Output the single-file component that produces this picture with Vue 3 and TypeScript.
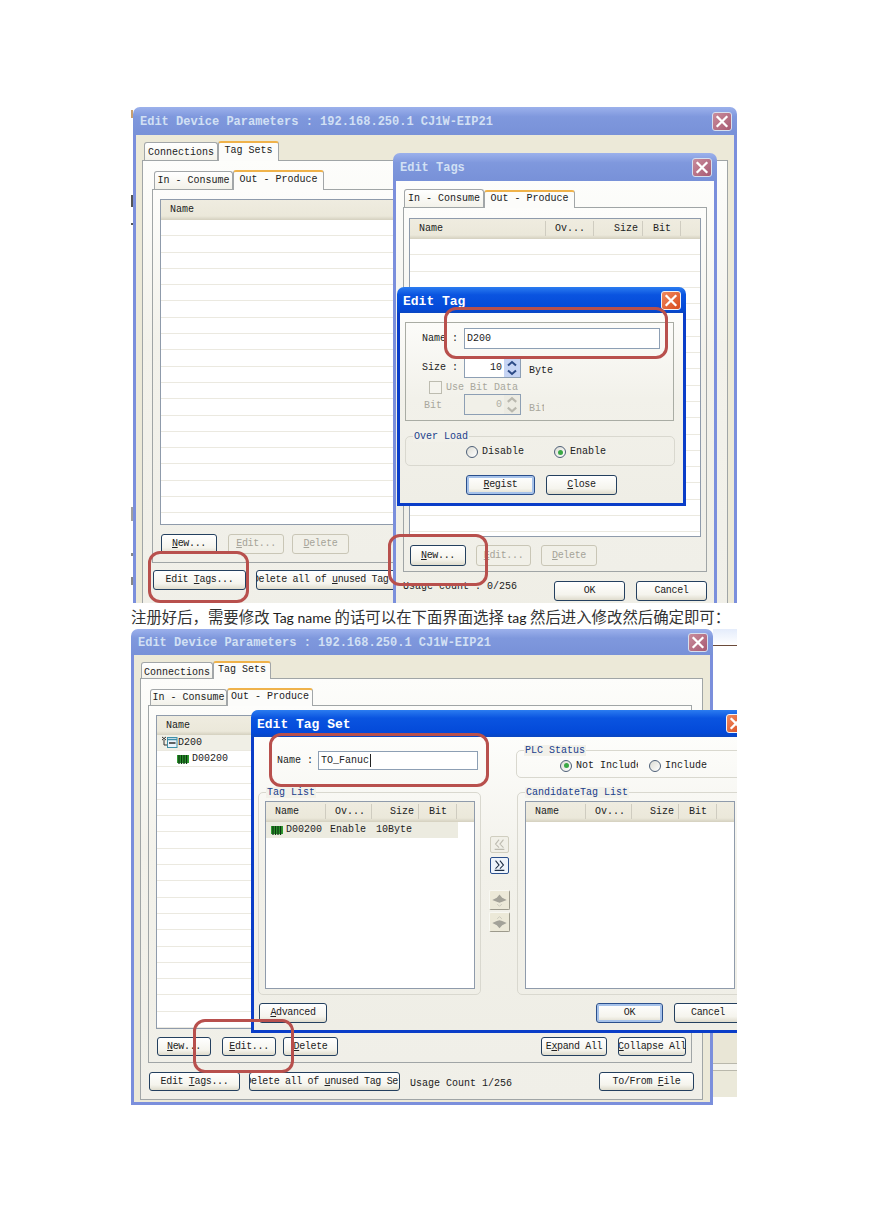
<script setup lang="ts">
const marks = [
  { top: 3, h: 8, c: '#c9a070' },
  { top: 88, h: 12, c: '#555' },
  { top: 116, h: 2, c: '#555' },
  { top: 400, h: 14, c: '#a0a0a0' },
  { top: 446, h: 3, c: '#888' },
  { top: 470, h: 8, c: '#888' }
]
const rows = (n: number) => Array.from({ length: n }, (_, i) => i)
</script>

<template>
  <div class="page">
    <section class="fig fig-a">
      <i v-for="m in marks" :key="m.top" class="mark" :style="{ top: m.top + 'px', height: m.h + 'px', background: m.c }"></i>

      <div class="win main-a">
        <header class="title dim">
          <span>Edit Device Parameters : 192.168.250.1 CJ1W-EIP21</span>
          <svg class="x x-dim" viewBox="0 0 20 19"><path d="M5 4.5l10 10M15 4.5l-10 10" stroke="#fff" stroke-width="2.6" stroke-linecap="square" /></svg>
        </header>
        <div class="body beige">
          <div class="tabs">
            <span class="tab w74 low">Connections</span>
            <span class="tab on w61">Tag Sets</span>
          </div>
          <div class="panel pa-outer">
            <div class="tabs tabs-in">
              <span class="tab w79">In - Consume</span>
              <span class="tab on w91">Out - Produce</span>
            </div>
            <div class="panel pa-inner">
              <div class="list la">
                <div class="head"><span class="cell">Name</span></div>
                <div v-for="r in rows(20)" :key="r" class="row"></div>
              </div>
              <div class="btns ba">
                <button class="b w56"><span><u>N</u>ew...</span></button>
                <button class="b off w56"><span><u>E</u>dit...</span></button>
                <button class="b off w57"><span><u>D</u>elete</span></button>
              </div>
            </div>
            <div class="btns bb">
              <button class="b w93"><span>Edit <u>T</u>ags...</span></button>
              <button class="b w152"><span>Delete all of <u>u</u>nused Tag Set</span></button>
            </div>
          </div>
        </div>
      </div>

      <div class="win tags-a">
        <header class="title dim">
          <span>Edit Tags</span>
          <svg class="x x-dim" viewBox="0 0 20 19"><path d="M5 4.5l10 10M15 4.5l-10 10" stroke="#fff" stroke-width="2.6" stroke-linecap="square" /></svg>
        </header>
        <div class="body soft ta-body">
          <div class="tabs tabs-t">
            <span class="tab w80">In - Consume</span>
            <span class="tab on w91">Out - Produce</span>
          </div>
          <div class="panel ta-panel">
            <div class="list lb">
              <div class="head grid-t">
                <span class="cell">Name</span><span class="cell">Ov...</span><span class="cell end">Size</span><span class="cell mid">Bit</span><span></span>
              </div>
              <div v-for="r in rows(19)" :key="r" class="row grid-t"><span></span><span></span><span></span><span></span><span></span></div>
            </div>
            <div class="btns bc">
              <button class="b focus-soft w56"><span><u>N</u>ew...</span></button>
              <button class="b off w55"><span><u>E</u>dit...</span></button>
              <button class="b off w56"><span><u>D</u>elete</span></button>
            </div>
          </div>
          <div class="foot">
            <span class="usage">Usage count : 0/256</span>
            <button class="b w71"><span>OK</span></button>
            <button class="b w71"><span>Cancel</span></button>
          </div>
        </div>
      </div>

      <div class="win active tag-dlg">
        <header class="title hot">
          <span>Edit Tag</span>
          <svg class="x x-hot" viewBox="0 0 20 19"><path d="M5 4.5l10 10M15 4.5l-10 10" stroke="#fff" stroke-width="2.6" stroke-linecap="square" /></svg>
        </header>
        <div class="body soft dlg-body">
          <div class="group form">
            <div class="frow r-name">
              <label class="lab">Name :</label>
              <span class="input w196">D200</span>
            </div>
            <div class="frow r-size">
              <label class="lab">Size :</label>
              <span class="input w57 num">10
                <span class="spin">
                  <svg viewBox="0 0 15 9"><path d="M3.5 6.5l4-3.5 4 3.5" fill="none" stroke="#2c4a86" stroke-width="2" /></svg>
                  <svg viewBox="0 0 15 9"><path d="M3.5 2.5l4 3.5 4-3.5" fill="none" stroke="#2c4a86" stroke-width="2" /></svg>
                </span>
              </span>
              <span class="unit">Byte</span>
            </div>
            <div class="frow r-check">
              <span class="check"></span><span class="gray">Use Bit Data</span>
            </div>
            <div class="frow r-bit">
              <label class="lab gray bitlab">Bit</label>
              <span class="input w57 num dis">0
                <span class="spin spin-dis">
                  <svg viewBox="0 0 15 9"><path d="M3.5 6.5l4-3.5 4 3.5" fill="none" stroke="#b9b8ae" stroke-width="2" /></svg>
                  <svg viewBox="0 0 15 9"><path d="M3.5 2.5l4 3.5 4-3.5" fill="none" stroke="#b9b8ae" stroke-width="2" /></svg>
                </span>
              </span>
              <span class="unit gray cutbit">Bit</span>
            </div>
          </div>
          <div class="group round overload">
            <span class="legend">Over Load</span>
            <span class="radio"></span><span class="rtext g1">Disable</span>
            <span class="radio on"></span><span class="rtext">Enable</span>
          </div>
          <div class="btns bd">
            <button class="b focus w69"><span><u>R</u>egist</span></button>
            <button class="b w71"><span><u>C</u>lose</span></button>
          </div>
        </div>
      </div>

      <div class="red r1"></div>
      <div class="red r2"></div>
      <div class="red r3"></div>
    </section>

    <p class="caption">注册好后，需要修改 <span class="lat">Tag name</span> 的话可以在下面界面选择 <span class="lat">tag</span> 然后进入修改然后确定即可：</p>

    <section class="fig fig-b">
      <div class="backdrop">
        <div class="bd-top"></div>
        <div class="bd-bot"></div>
      </div>

      <div class="win main-b">
        <header class="title dim short">
          <span>Edit Device Parameters : 192.168.250.1 CJ1W-EIP21</span>
          <svg class="x x-dim" viewBox="0 0 20 19"><path d="M5 4.5l10 10M15 4.5l-10 10" stroke="#fff" stroke-width="2.6" stroke-linecap="square" /></svg>
        </header>
        <div class="body beige">
          <div class="tabs tabs-c">
            <span class="tab w72 low">Connections</span>
            <span class="tab on w58">Tag Sets</span>
          </div>
          <div class="panel pb-outer">
            <div class="tabs tabs-d">
              <span class="tab w77">In - Consume</span>
              <span class="tab on w86">Out - Produce</span>
            </div>
            <div class="panel pb-inner">
              <div class="list lc">
                <div class="head hb"><span class="cell">Name</span></div>
                <div class="row sel">
                  <svg class="tree" viewBox="0 0 16 13">
                    <path d="M0 1l4 3M4 1L0 4M2 4v5h3" stroke="#333" fill="none" />
                    <rect x="5.500" y="1.500" width="9.500" height="10" fill="#eaf3fc" stroke="#3f8fa8" />
                    <path d="M5.500 3.500h9.500" stroke="#3f8fa8" stroke-width="1.500" />
                    <path d="M7 7h6.500" stroke="#222" stroke-width="1.400" />
                  </svg>
                  <span class="sans">D200</span>
                </div>
                <div class="row">
                  <svg class="chip ind" viewBox="0 0 12 10">
                    <rect width="12" height="8" y="1" fill="#2f9a2f" />
                    <path d="M2 1v9M4.500 1v9M7 1v9M9.500 1v9" stroke="#0c3a10" stroke-width="1.300" />
                  </svg>
                  <span class="sans">D00200</span>
                </div>
                <div v-for="r in rows(17)" :key="r" class="row"></div>
              </div>
              <div class="btns be">
                <button class="b w54"><span><u>N</u>ew...</span></button>
                <button class="b w54 ml11"><span><u>E</u>dit...</span></button>
                <button class="b w55 ml7"><span><u>D</u>elete</span></button>
                <span class="grow"></span>
                <button class="b w66"><span>E<u>x</u>pand All</span></button>
                <button class="b w68 ml11"><span><u>C</u>ollapse All</span></button>
              </div>
            </div>
            <div class="btns bf">
              <button class="b w91"><span>Edit <u>T</u>ags...</span></button>
              <button class="b w151 ml9"><span>Delete all of <u>u</u>nused Tag Set</span></button>
              <span class="count">Usage Count 1/256</span>
              <span class="grow"></span>
              <button class="b w95"><span>To/From <u>F</u>ile</span></button>
            </div>
          </div>
        </div>
      </div>

      <div class="win active set-dlg">
        <header class="title hot h27">
          <span>Edit Tag Set</span>
          <svg class="x x-hot" viewBox="0 0 20 19"><path d="M5 4.5l10 10M15 4.500l-10 10" stroke="#fff" stroke-width="2.6" stroke-linecap="square" /></svg>
        </header>
        <div class="body soft set-body">
          <div class="set-top">
            <div class="set-name">
              <label class="lab ln">Name :</label>
              <span class="input w160">TO_Fanuc<i class="caret"></i></span>
            </div>
            <div class="group round plc">
              <span class="legend">PLC Status</span>
              <span class="radio on"></span><span class="rtext clip">Not Include</span>
              <span class="radio"></span><span class="rtext">Include</span>
            </div>
          </div>
          <div class="set-mid">
            <div class="group round gl">
              <span class="legend">Tag List</span>
              <div class="list ld">
                <div class="head grid-s">
                  <span class="cell">Name</span><span class="cell">Ov...</span><span class="cell end">Size</span><span class="cell mid">Bit</span><span></span>
                </div>
                <div class="item">
                  <svg class="chip" viewBox="0 0 12 10">
                    <rect width="12" height="8" y="1" fill="#2f9a2f" />
                    <path d="M2 1v9M4.500 1v9M7 1v9M9.500 1v9" stroke="#0c3a10" stroke-width="1.300" />
                  </svg>
                  <span class="sans i1">D00200</span><span class="i2">Enable</span><span class="i3">10Byte</span>
                </div>
              </div>
            </div>
            <div class="arrows">
              <button class="ab off">
                <svg viewBox="0 0 19 17"><path d="M9 3L5 8l4 4M14 3l-4 5 4 4M4 14h11" fill="none" stroke="#bdbbb0" stroke-width="1.200" /></svg>
              </button>
              <button class="ab live">
                <svg viewBox="0 0 19 17"><path d="M5 3l4 5-4 4M10 3l4 5-4 4M4 14h11" fill="none" stroke="#1f2f46" stroke-width="1.200" /></svg>
              </button>
              <button class="ab sq first">
                <svg viewBox="0 0 21 20"><path d="M10.500 4l3 3.500 5 2.500-5 2-3 1-3-1-5-2 5-2.500z" fill="#a3a298" /><path d="M8 14.500l2.500 2.500 2.500-2.500" fill="none" stroke="#c6c5b9" /></svg>
              </button>
              <button class="ab sq">
                <svg viewBox="0 0 21 20"><path d="M10.500 17l3-3.500 5-2.500-5-2-3-1-3 1-5 2 5 2.500z" fill="#a3a298" /><path d="M8 6.500L10.500 4 13 6.500" fill="none" stroke="#c6c5b9" /></svg>
              </button>
            </div>
            <div class="group round gr">
              <span class="legend">CandidateTag List</span>
              <div class="list le">
                <div class="head grid-s">
                  <span class="cell">Name</span><span class="cell">Ov...</span><span class="cell end">Size</span><span class="cell mid">Bit</span><span></span>
                </div>
              </div>
            </div>
          </div>
          <div class="btns bg">
            <button class="b w68"><span><u>A</u>dvanced</span></button>
            <span class="grow"></span>
            <button class="b focus w67"><span>OK</span></button>
            <button class="b w68 ml11"><span>Cancel</span></button>
          </div>
        </div>
      </div>

      <div class="red r4"></div>
      <div class="red r5"></div>
    </section>
  </div>
</template>

<style>
html, body { background: #fff; }
</style>

<style scoped>
.page {
  width: 869px;
  height: 1228px;
  padding: 107px 0 0 131px;
  box-sizing: border-box;
  background: #fff;
  font: 10px/1.2 "Liberation Mono", "DejaVu Sans Mono", monospace;
  color: #222;
  overflow: hidden;
}
.fig { position: relative; overflow: hidden; }
.fig-a { width: 607px; height: 496px; }
.fig-b { width: 606px; height: 476px; }
.mark { position: absolute; left: 0; width: 2px; }
.caption {
  margin: 0;
  height: 26px;
  width: 640px;
  font: 15.4px/26px "Noto Sans CJK SC", sans-serif;
  color: #333;
  white-space: nowrap;
}
.lat { font: 14px/26px Lato, sans-serif; color: #1c1c1c; }

/* windows */
.win { position: absolute; }
.main-a { left: 2px; top: 0; width: 604px; height: 520px; }
.tags-a { left: 262px; top: 46px; width: 324px; height: 470px; }
.tag-dlg { left: 266px; top: 180px; width: 289px; height: 219px; }
.main-b { left: 0; top: 0; width: 582px; height: 476px; }
.set-dlg { left: 120px; top: 81px; width: 500px; height: 323px; }

.title {
  height: 28px;
  box-sizing: border-box;
  border-radius: 7px 7px 0 0;
  display: flex;
  align-items: center;
  justify-content: space-between;
  padding: 0 5px 0 7px;
  font-size: 12px;
  font-weight: 700;
  white-space: nowrap;
}
.title > span { padding-top: 3px; }
.short { height: 26px; padding-right: 5px; }
.short > span { padding-top: 2px; }
.h27 { height: 27px; }
.dim {
  background: linear-gradient(#9cb1ec, #7f98dd 35%, #7891d8);
  color: #d2e0f4;
}
.hot {
  background: linear-gradient(#2b7cf0, #0a54e0 30%, #0349d8 85%, #0a46c0);
  color: #fff;
  font-size: 13px;
  height: 26px;
  padding-left: 6px;
}
.set-dlg .hot { height: 27px; }
.set-dlg .hot > span { padding-top: 2px; }
.x { width: 20px; height: 19px; border-radius: 3px; flex: none; }
.x-dim { background: linear-gradient(135deg, #c98c9c, #a85a72); border: 1px solid #d7dfee; box-sizing: border-box; }
.x-hot { background: linear-gradient(135deg, #f08a60, #d84a1c); border: 1px solid #f2f2f2; box-sizing: border-box; }

.body {
  box-sizing: border-box;
  border: solid #7b8fdc;
  border-width: 0 3px 3px;
}
.active .body { border-color: #0a3dc8; }
.beige { background: #ece9d8; padding: 5px 6px 0; height: calc(100% - 28px); }
.main-b .beige { height: calc(100% - 26px); padding-right: 7px; }
.soft { background: linear-gradient(#fdfdfb, #f2f1ea 45%, #efeee6); }

/* tabs */
.tabs { display: flex; align-items: flex-end; height: 20px; }
.tab {
  height: 18px;
  box-sizing: border-box;
  border: 1px solid #a2a6a8;
  border-bottom: 0;
  border-radius: 3px 3px 0 0;
  background: linear-gradient(#fff, #f3f2ea);
  text-align: center;
  line-height: 18px;
  white-space: nowrap;
}
.tab.on {
  height: 20px;
  border-top: 2px solid #efb24a;
  background: #fcfcfa;
  line-height: 15px;
  z-index: 1;
  margin-bottom: -1px;
}
.w74 { width: 74px; margin-left: 2px; }
.w61 { width: 61px; }
.w79 { width: 79px; margin-left: 2px; }
.w91 { width: 91px; }
.w80 { width: 80px; }
.w72 { width: 72px; margin-left: 1px; }
.w58 { width: 58px; }
.w77 { width: 77px; margin-left: 2px; }
.w86 { width: 86px; }
.tabs-t { height: 18px; padding-left: 1px; }
.tabs-t .tab.on { height: 18px; line-height: 13px; }
.tabs-c { height: 18px; }
.tabs-c .tab { height: 16px; line-height: 16px; }
.tabs-c .tab.on { height: 18px; line-height: 13px; }
.tabs-d { height: 18px; }
.tabs-d .tab { height: 16px; line-height: 16px; }
.tabs-d .tab.on { height: 18px; line-height: 13px; }
.tab.low { line-height: 20px; }
.tabs-c .tab.low { line-height: 19px; }

.panel {
  border: 1px solid #a0a5a6;
  box-sizing: border-box;
  background: linear-gradient(#fdfdfb, #f3f2eb 40%, #f0efe8);
}
.pa-outer { padding: 8px 11px 0 9px; height: 460px; }
.pa-inner { padding: 9px 0 8px 7px; height: 374px; }
.ta-body { padding: 8px 7px 0; height: 442px; }
.ta-panel { padding: 10px 5px 0; height: 365px; }
.pb-outer { padding: 8px 10px 0 7px; height: 422px; }
.pb-inner { padding: 9px 5px 0 7px; height: 358px; }

/* lists */
.list {
  border: 1px solid #8f9bab;
  box-sizing: border-box;
  background: #fff;
  overflow: hidden;
}
.la { height: 326px; }
.lb { height: 319px; }
.lc { height: 314px; }
.ld { height: 188px; }
.le { height: 188px; }
.head {
  height: 20px;
  background: linear-gradient(#efece0, #ebe8da 80%, #d4d0bf);
  line-height: 20px;
  box-sizing: border-box;
}
.hb { height: 19px; }
.cell { padding-left: 9px; display: block; white-space: nowrap; }
.head .cell:not(:only-child) { border-right: 1px solid #cfccc0; height: 15px; line-height: 15px; margin-top: 2px; }
.cell.end { text-align: right; padding: 0 4px 0 0; }
.cell.mid { padding-left: 10px; }
.row { height: 16.3px; border-bottom: 1px solid #ebe9e0; box-sizing: border-box; display: flex; align-items: center; }
.row.sel { background: #f0efe6; height: 16px; }
.grid-t { display: grid; grid-template-columns: 136px 48px 49px 38px 1fr; }
.row.grid-t > span { border-right: 1px solid #efede5; }
.grid-s { display: grid; grid-template-columns: 60px 46px 47px 38px 1fr; }
.tree { width: 16px; height: 13px; margin-left: 5px; }
.chip { width: 12px; height: 10px; flex: none; }
.chip.ind { margin-left: 20px; margin-right: 3px; }
.sans { font-size: 10px; }
.item {
  height: 16px;
  width: 192px;
  background: #ecebe0;
  display: flex;
  align-items: center;
  padding-left: 5px;
  box-sizing: border-box;
  white-space: nowrap;
}
.i1 { margin-left: 3px; width: 44px; }
.i2 { width: 46px; }

/* buttons */
.btns { display: flex; align-items: flex-start; }
.b {
  height: 20px;
  padding: 0;
  box-sizing: border-box;
  border: 1px solid #24405f;
  border-radius: 3px;
  background: linear-gradient(#fff, #f5f4ed 70%, #dfdccd);
  font: inherit;
  letter-spacing: -0.35px;
  color: #222;
  display: flex;
  align-items: center;
  justify-content: center;
  white-space: pre;
  overflow: hidden;
  flex: none;
}
.b > span { flex: none; }
.b u { text-underline-offset: 1px; }
.b.off { border-color: #c9c6b6; background: #f1f0e8; color: #a5a398; }
.b.focus { box-shadow: inset 0 0 0 2px #a6c2ea; border-color: #2a4f8c; }
.b.focus-soft { border-color: #24405f; }
.ba { margin-top: 9px; margin-left: 1px; gap: 11px; }
.ba .w57 { margin-left: -3px; }
.bb { margin: 7px 0 0 1px; gap: 10px; }
.bc { margin: 8px 0 0 1px; gap: 10px; }
.bc .b { height: 21px; }
.bd { margin-top: 9px; justify-content: center; gap: 11px; }
.be { margin: 8px 0 0 1px; }
.be .b, .bf .b { height: 19px; }
.bf { margin: 9px -2px 0 1px; align-items: center; }
.bg { margin: 8px 0 0 1px; }
.grow { flex: 1; }
.ml7 { margin-left: 7px; }
.ml9 { margin-left: 9px; }
.ml11 { margin-left: 11px; }
.w54 { width: 54px; }
.w55 { width: 55px; }
.w56 { width: 56px; }
.w57 { width: 57px; }
.w66 { width: 66px; }
.w67 { width: 67px; }
.w68 { width: 68px; }
.w69 { width: 69px; }
.w71 { width: 71px; }
.w93 { width: 93px; }
.w91.b { width: 91px; }
.w95 { width: 95px; }
.w151 { width: 151px; }
.w152 { width: 152px; }
.foot { display: flex; margin-top: 9px; align-items: flex-start; }
.usage { width: 152px; margin-right: 1px; margin-top: 0; }
.foot .b + .b { margin-left: 11px; }
.count { margin-left: 10px; margin-top: 5px; }

/* edit tag dialog */
.dlg-body { padding: 9px 5px 0; height: calc(100% - 26px); }
.group {
  position: relative;
  border: 1px solid #a9aca4;
  box-sizing: border-box;
}
.round { border: 1px solid #d9d8cf; border-radius: 5px; }
.form { height: 99px; width: 269px; }
.frow { display: flex; align-items: center; white-space: nowrap; }
.lab { width: 58px; padding-left: 16px; box-sizing: border-box; flex: none; }
.r-name { margin-top: 5px; height: 21px; }
.r-size { margin-top: 9px; height: 20px; }
.r-check { margin-top: 4px; height: 11px; padding-left: 23px; }
.r-bit { margin-top: 1px; height: 21px; }
.input {
  box-sizing: border-box;
  border: 1px solid #8d9fb4;
  background: #fff;
  height: 100%;
  display: flex;
  align-items: center;
  padding-left: 2px;
  position: relative;
  flex: none;
  font-size: 10px;
}
.w196 { width: 196px; }
.w57.input { width: 57px; }
.w160 { width: 160px; height: 19px; }
.num { justify-content: flex-end; padding-right: 18px; }
.dis { background: #f1f0e8; color: #b0afa4; }
.spin {
  position: absolute;
  right: 0;
  top: 0;
  bottom: 0;
  width: 16px;
  background: #c6d4f4;
  display: flex;
  flex-direction: column;
}
.spin svg { flex: 1; min-height: 0; width: 100%; }
.spin-dis { background: #ecebe2; }
.unit { margin-left: 8px; padding-top: 6px; }
.r-bit .lab { padding-top: 3px; }
.gray { color: #a8a79c; }
.bitlab { padding-left: 18px; }
.cutbit { width: 15px; overflow: hidden; padding-top: 9px; }
.check { width: 11px; height: 11px; border: 1px solid #bdbcb0; margin-right: 4px; background: #f5f4ee; flex: none; }
.overload {
  margin-top: 15px;
  height: 30px;
  width: 270px;
  display: flex;
  align-items: center;
  padding: 2px 0 0 60px;
}
.legend {
  position: absolute;
  left: 7px;
  top: -6px;
  padding: 0 1px;
  background: #f2f1ea;
  color: #20408c;
  line-height: 11px;
}
.radio {
  width: 12px;
  height: 12px;
  border-radius: 50%;
  border: 1px solid #4d5f77;
  box-sizing: border-box;
  background: linear-gradient(135deg, #dcdcd4, #fff);
  flex: none;
  display: flex;
  align-items: center;
  justify-content: center;
  margin-right: 4px;
}
.radio.on::after { content: ""; width: 5px; height: 5px; border-radius: 50%; background: #3aa845; }
.g1 { margin-right: 30px; }
.rtext { white-space: nowrap; }

/* edit tag set dialog */
.set-body { padding: 13px 6px 0 4px; height: calc(100% - 27px); }
.set-top { display: flex; height: 28px; }
.set-name { display: flex; align-items: center; width: 258px; height: 21px; flex: none; }
.ln { width: 60px; padding-left: 19px; }
.caret { display: inline-block; width: 1px; height: 13px; background: #222; margin-left: 1px; }
.plc { width: 228px; height: 28px; display: flex; align-items: center; padding: 3px 0 0 43px; }
.clip { width: 62px; overflow: hidden; margin-right: 11px; }
.set-mid { display: flex; margin-top: 14px; }
.gl { width: 223px; height: 203px; padding: 8px 5px 0 6px; flex: none; }
.gr { width: 225px; height: 203px; padding: 8px 6px 0 7px; flex: none; }
.arrows { width: 36px; flex: none; display: flex; flex-direction: column; align-items: center; padding-top: 44px; box-sizing: border-box; }
.ab { padding: 0; box-sizing: border-box; background: #f1f0e8; border: 1px solid #d0cebf; border-radius: 2px; display: block; flex: none; }
.ab svg { display: block; width: 100%; height: 100%; }
.ab.off, .ab.live { width: 19px; height: 17px; }
.ab.live { margin-top: 4px; border-color: #2a4f8c; background: #eef4fb; }
.ab.sq { width: 21px; height: 20px; margin-top: 2px; border: 1px solid; border-color: #f8f8f2 #9c9a8c #9c9a8c #f8f8f2; background: #ece9d8; }
.ab.first { margin-top: 16px; }

/* backdrop for figure b */
.backdrop { position: absolute; left: 582px; right: 0; top: 0; bottom: 0; }
.bd-top { height: 16px; background: linear-gradient(#e4ecfb, #fff); border-bottom: 1px solid #6a4a3a; box-sizing: content-box; }
.bd-bot {
  position: absolute;
  left: 0;
  right: 0;
  top: 400px;
  height: 68px;
  background: linear-gradient(#e9e6d6 0 34px, #b9b8ac 34px 35px, #f4f3ec 35px 41px, #b9b8ac 41px 42px, #ebe9da 42px);
}

/* annotations */
.red {
  position: absolute;
  border: 3.5px solid #b8504d;
  border-radius: 12px;
  box-sizing: border-box;
  z-index: 5;
}
.r1 { left: 17px; top: 444px; width: 101px; height: 52px; }
.r2 { left: 257px; top: 427px; width: 100px; height: 52px; }
.r3 { left: 313px; top: 200px; width: 224px; height: 52px; }
.r4 { left: 138px; top: 104px; width: 220px; height: 54px; }
.r5 { left: 62px; top: 390px; width: 101px; height: 54px; }
</style>
